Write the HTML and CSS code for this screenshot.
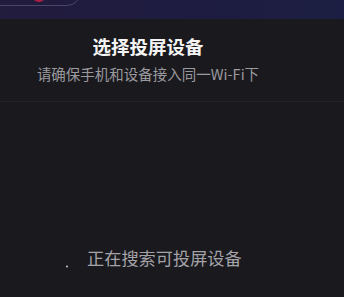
FILE: index.html
```
<!DOCTYPE html>
<html lang="zh-CN">
<head>
<meta charset="utf-8">
<link rel="stylesheet" href="styles.css">
</head>
<body>
<div class="top">
  <div class="pill"><span class="red"></span></div>
</div>
<div class="sheet">
  <div class="header">
    <div class="col">
      <div class="title">选择投屏设备</div>
      <div class="sub">请确保手机和设备接入同一Wi-Fi下</div>
    </div>
  </div>
  <div class="loading">
    <svg class="spin" width="20" height="20" viewBox="0 0 20 20"><circle cx="9" cy="18.5" r="1.1" fill="#b8b8b8"/></svg>
    <span class="ltext">正在搜索可投屏设备</span>
  </div>
</div>
</body>
</html>
```
FILE: styles.css
```
html, body { margin: 0; padding: 0; }
body {
  width: 344px; height: 297px; overflow: hidden;
  background: #1a191e;
  font-family: "Noto Sans CJK SC", "Noto Sans", sans-serif;
}
.top {
  height: 19px; overflow: hidden;
  background: linear-gradient(90deg, #221c3d 0%, #1e1c40 50%, #1b1e42 100%);
}
.pill {
  width: 101px; height: 28px; margin-top: -22px; margin-left: -20px;
  border: 1.5px solid #4b4569; border-radius: 18px;
  display: flex; padding-left: 52px; padding-top: 13px; box-sizing: border-box;
}
.red { display: block; width: 12px; height: 10px; border-radius: 50%; background: #b01e46; }
.sheet { background: #1a191e; height: 278px; }
.header { border-bottom: 1px solid #232228; padding-top: 15px; padding-bottom: 17px; }
.col { width: 296px; display: flex; flex-direction: column; align-items: center; }
.title { color: #f4f4f4; font-size: 18.5px; font-weight: 700; line-height: 24px; }
.sub { color: #9a999e; font-size: 14.5px; line-height: 20px; margin-top: 6px; }
.loading { display: flex; align-items: center; padding-left: 58px; padding-top: 144px; gap: 9px; }
.spin { display: block; }
.ltext { color: #a4a3a8; font-size: 17.2px; line-height: 24px; }
```
